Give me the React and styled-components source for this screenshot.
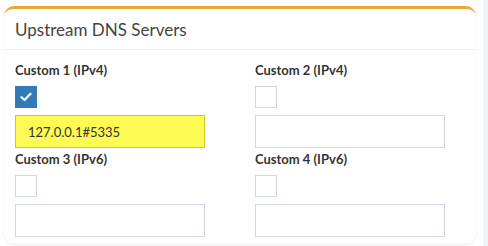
import React from "react";
import styled, { createGlobalStyle } from "styled-components";

const GlobalStyle = createGlobalStyle`
  html, body {
    margin: 0;
    padding: 0;
    background: #ffffff;
  }
  body {
    font-family: "Lato", "Open Sans", sans-serif;
    color: #333;
  }
`;

const servers = [
  { label: "Custom 1 (IPv4)", checked: true, value: "127.0.0.1#5335" },
  { label: "Custom 2 (IPv4)", checked: false, value: "" },
  { label: "Custom 3 (IPv6)", checked: false, value: "" },
  { label: "Custom 4 (IPv6)", checked: false, value: "" },
];

export default function App() {
  return (
    <Page>
      <GlobalStyle />
      <Card>
        <Header>
          <Title>Upstream DNS Servers</Title>
        </Header>
        <Body>
          {servers.map((s) => (
            <Field key={s.label}>
              <Label>{s.label}</Label>
              <Checkbox $checked={s.checked}>
                {s.checked && (
                  <svg width="12" height="10" viewBox="0 0 12 10">
                    <path
                      d="M1.5 5.2 L4.6 8 L10.5 1.8"
                      fill="none"
                      stroke="#fff"
                      strokeWidth="2.2"
                      strokeLinecap="round"
                      strokeLinejoin="round"
                    />
                  </svg>
                )}
              </Checkbox>
              <Input $filled={!!s.value}>{s.value}</Input>
            </Field>
          ))}
        </Body>
      </Card>
      <Strip />
    </Page>
  );
}

const Page = styled.div`
  display: flex;
  width: 488px;
  height: 246px;
  overflow: hidden;
`;

const Card = styled.div`
  margin: 6px 0 0 4px;
  width: 472px;
  height: 238px;
  box-sizing: border-box;
  border-top: 3px solid #e9a83a;
  border-radius: 10px;
  background: #fff;
  box-shadow: 0 1px 2px rgba(0, 0, 0, 0.08);
`;

const Strip = styled.div`
  margin-left: auto;
  width: 5px;
  background: #f1f3f6;
`;

const Header = styled.div`
  height: 40px;
  padding: 0 11px;
  display: flex;
  align-items: center;
  border-bottom: 1px solid #f2f2f2;
`;

const Title = styled.h3`
  margin: 0;
  font-size: 17px;
  font-weight: 400;
  color: #444;
`;

const Body = styled.div`
  display: grid;
  grid-template-columns: 240px 240px;
  padding: 11px 0 0 11px;
  row-gap: 2px;
`;

const Field = styled.div`
  display: flex;
  flex-direction: column;
  align-items: flex-start;
`;

const Label = styled.div`
  font-size: 13px;
  font-weight: 700;
  line-height: 18px;
  color: #333;
`;

const Checkbox = styled.div`
  margin-top: 7px;
  width: 22px;
  height: 22px;
  box-sizing: border-box;
  display: flex;
  align-items: center;
  justify-content: center;
  background: ${(p) => (p.$checked ? "#337ab7" : "#fff")};
  border: 1px solid ${(p) => (p.$checked ? "#337ab7" : "#d2d6de")};
`;

const Input = styled.div`
  margin-top: 7px;
  width: 190px;
  height: 33px;
  box-sizing: border-box;
  padding: 0 12px;
  display: flex;
  align-items: center;
  font-size: 13px;
  color: #333;
  background: ${(p) => (p.$filled ? "#fefb55" : "#fff")};
  border: 1px solid ${(p) => (p.$filled ? "#d9c51f" : "#d2d6de")};
`;
